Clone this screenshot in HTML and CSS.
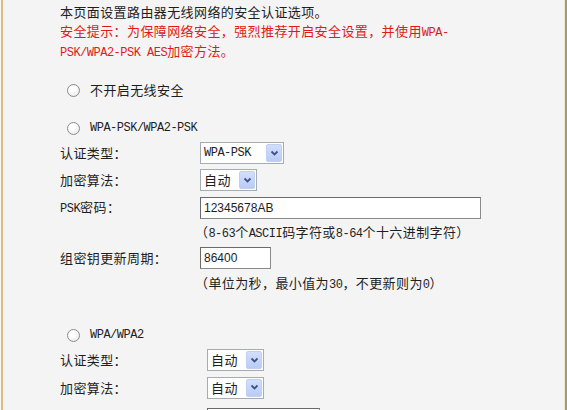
FILE: index.html
```html
<!DOCTYPE html>
<html lang="zh-CN">
<head>
<meta charset="utf-8">
<title>无线网络安全设置</title>
<link rel="stylesheet" href="styles.css">
</head>
<body>
<div class="frame">
  <div class="intro">
    <p class="line"><span>本页面设置路由器无线网络的安全认证选项。</span></p>
    <p class="line warn"><span>安全提示：为保障网络安全，强烈推荐开启安全设置，并使用<span class="en">WPA-</span></span></p>
    <p class="line warn"><span><span class="en">PSK/WPA2-PSK AES</span>加密方法。</span></p>
  </div>

  <div class="radio-row r1"><span class="radio"></span><span>不开启无线安全</span></div>

  <div class="radio-row r2"><span class="radio"></span><span class="en">WPA-PSK/WPA2-PSK</span></div>
  <div class="row ra">
    <span class="label">认证类型：</span>
    <div class="select w84"><span class="en">WPA-PSK</span><span class="btn"><svg width="9" height="7" viewBox="0 0 9 7"><path d="M1.5 1.5 L4.5 4.5 L7.5 1.5" fill="none" stroke="#3e5488" stroke-width="1.8"/></svg></span></div>
  </div>
  <div class="row rb">
    <span class="label">加密算法：</span>
    <div class="select w57"><span>自动</span><span class="btn"><svg width="9" height="7" viewBox="0 0 9 7"><path d="M1.5 1.5 L4.5 4.5 L7.5 1.5" fill="none" stroke="#3e5488" stroke-width="1.8"/></svg></span></div>
  </div>
  <div class="row rc">
    <span class="label"><span class="en">PSK</span>密码：</span>
    <div class="input w281">12345678AB</div>
  </div>
  <div class="hint h1"><span>（<span class="en">8-63</span>个<span class="en">ASCII</span>码字符或<span class="en">8-64</span>个十六进制字符）</span></div>
  <div class="row rd">
    <span class="label">组密钥更新周期：</span>
    <div class="input w71">86400</div>
  </div>
  <div class="hint h2"><span>（单位为秒，最小值为<span class="en">30</span>，不更新则为<span class="en">0</span>）</span></div>

  <div class="radio-row r3"><span class="radio"></span><span class="en">WPA/WPA2</span></div>
  <div class="row re">
    <span class="label wide">认证类型：</span>
    <div class="select w57"><span>自动</span><span class="btn"><svg width="9" height="7" viewBox="0 0 9 7"><path d="M1.5 1.5 L4.5 4.5 L7.5 1.5" fill="none" stroke="#3e5488" stroke-width="1.8"/></svg></span></div>
  </div>
  <div class="row rf">
    <span class="label wide">加密算法：</span>
    <div class="select w57"><span>自动</span><span class="btn"><svg width="9" height="7" viewBox="0 0 9 7"><path d="M1.5 1.5 L4.5 4.5 L7.5 1.5" fill="none" stroke="#3e5488" stroke-width="1.8"/></svg></span></div>
  </div>
  <div class="row rg">
    <span class="label wide"><span class="en">Radius</span>服务器<span class="en">IP</span>：</span>
    <div class="input w113"></div>
  </div>
</div>
</body>
</html>
```

FILE: styles.css
```css
body {
  margin: 0;
  background: #fbf7ee;
  font-family: "Noto Sans CJK SC", "Noto Sans", sans-serif;
  font-size: 13px;
  color: #1e1e1e;
  letter-spacing: 0.4px;
}

.frame {
  margin-left: 1px;
  width: 562px;
  height: 410px;
  border-left: 2px solid #d9bd86;
  border-right: 2px solid #a8987a;
  box-shadow: inset -1px 0 0 #efe5d2;
  background: #f4f4f4;
  overflow: hidden;
}

.en {
  font-family: "Liberation Mono", "DejaVu Sans Mono", monospace;
  font-size: 12px;
  letter-spacing: -0.5px;
}

p { margin: 0; }

.intro {
  padding: 2px 0 0 57px;
  white-space: nowrap;
}
.line {
  height: 20px;
  display: flex;
  align-items: center;
  line-height: 16px;
}

.warn { color: #df1a1a; }

.radio-row {
  display: flex;
  align-items: center;
  gap: 10px;
  padding-left: 64px;
  height: 24px;
  line-height: 16px;
}
.r1 { margin-top: 16px; }
.r2 { margin-top: 14px; }
.r3 { margin-top: 26px; }

.radio {
  width: 11px;
  height: 11px;
  border: 1px solid #8c8c8c;
  border-radius: 50%;
  background: radial-gradient(circle at 40% 35%, #ffffff 30%, #e2e2e2 100%);
  flex: none;
}

.row {
  display: flex;
  align-items: center;
  padding-left: 57px;
  line-height: 16px;
}
.ra { height: 26px; }
.rb { height: 28px; }
.rc { height: 27px; }
.rd { height: 26px; }
.re { height: 26px; }
.rf { height: 29px; }
.rg { height: 28px; align-items: flex-start; padding-top: 6px; }

.label {
  width: 140px;
  flex: none;
  white-space: nowrap;
}
.label.wide { width: 147px; }

.hint {
  padding-left: 192px;
  line-height: 16px;
  white-space: nowrap;
  display: flex;
  align-items: center;
}
.h1 { height: 24px; }
.h2 { height: 26px; }

.select {
  box-sizing: border-box;
  height: 22px;
  border: 1px solid #a5acb2;
  background: #fff;
  display: flex;
  align-items: center;
  justify-content: space-between;
  padding: 0 1px 0 3px;
}
.w84 { width: 84px; }
.w57 { width: 57px; }

.btn {
  box-sizing: border-box;
  width: 16px;
  height: 18px;
  border: 1px solid #bfd0f6;
  border-radius: 2px;
  background: linear-gradient(#d3defb, #b9cbf6);
  display: flex;
  align-items: center;
  justify-content: center;
}

.input {
  box-sizing: border-box;
  height: 22px;
  border: 1px solid #6a6a6a;
  border-right-color: #8a8a8a;
  border-bottom-color: #8a8a8a;
  background: #fff;
  font-family: "Liberation Sans", Arial, sans-serif;
  font-size: 12px;
  letter-spacing: 0;
  line-height: 20px;
  padding-left: 3px;
}
.w281 { width: 281px; }
.w71 { width: 71px; }
.w113 { width: 113px; }
```
